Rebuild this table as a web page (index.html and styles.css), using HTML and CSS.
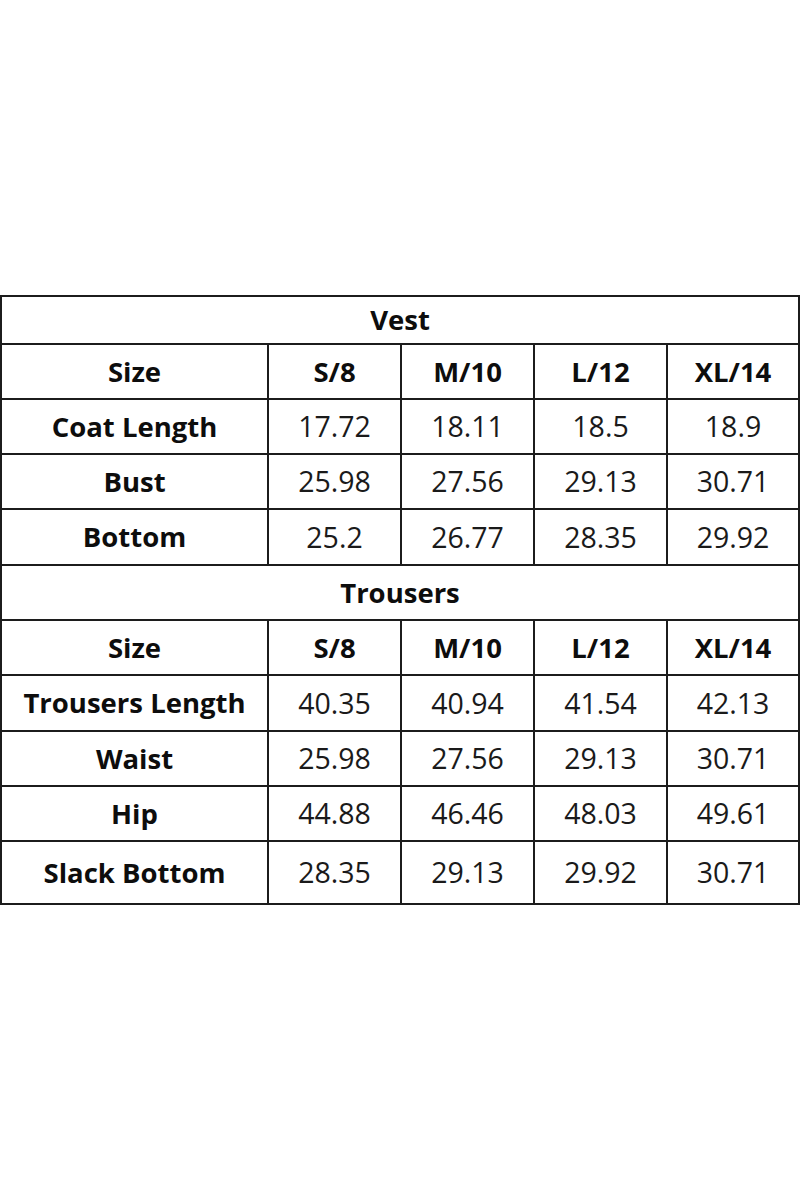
FILE: index.html
```html
<!DOCTYPE html>
<html>
<head>
<meta charset="utf-8">
<link rel="stylesheet" href="styles.css">
</head>
<body>
<div class="chart">
  <div class="cell title r0">Vest</div>
  <div class="cell head r1">Size</div><div class="cell head r1">S/8</div><div class="cell head r1">M/10</div><div class="cell head r1">L/12</div><div class="cell head r1">XL/14</div>
  <div class="cell head">Coat Length</div><div class="cell">17.72</div><div class="cell">18.11</div><div class="cell">18.5</div><div class="cell">18.9</div>
  <div class="cell head">Bust</div><div class="cell">25.98</div><div class="cell">27.56</div><div class="cell">29.13</div><div class="cell">30.71</div>
  <div class="cell head">Bottom</div><div class="cell">25.2</div><div class="cell">26.77</div><div class="cell">28.35</div><div class="cell">29.92</div>
  <div class="cell title">Trousers</div>
  <div class="cell head">Size</div><div class="cell head">S/8</div><div class="cell head">M/10</div><div class="cell head">L/12</div><div class="cell head">XL/14</div>
  <div class="cell head">Trousers Length</div><div class="cell">40.35</div><div class="cell">40.94</div><div class="cell">41.54</div><div class="cell">42.13</div>
  <div class="cell head">Waist</div><div class="cell">25.98</div><div class="cell">27.56</div><div class="cell">29.13</div><div class="cell">30.71</div>
  <div class="cell head">Hip</div><div class="cell">44.88</div><div class="cell">46.46</div><div class="cell">48.03</div><div class="cell">49.61</div>
  <div class="cell head">Slack Bottom</div><div class="cell">28.35</div><div class="cell">29.13</div><div class="cell">29.92</div><div class="cell">30.71</div>
</div>
</body>
</html>
```
FILE: styles.css
```css
html, body {
  margin: 0;
  padding: 0;
  background: #ffffff;
}
body {
  padding-top: 295px;
  font-family: "Open Sans", "DejaVu Sans", sans-serif;
  color: #111111;
}
.chart {
  width: 800px;
  box-sizing: border-box;
  display: grid;
  grid-template-columns: 265px 131px 131px 131px 1fr;
  grid-template-rows: 46px 53px 53px 53px 54px 53px 53px 54px 53px 53px 61px;
  gap: 2px;
  padding: 2px;
  background: #1c1c1c;
}
.cell {
  background: #ffffff;
  display: flex;
  align-items: center;
  justify-content: center;
  font-size: 28.5px;
  font-weight: 400;
  line-height: 1;
  color: #1a1a1a;
}
.head, .title {
  font-weight: 700;
  font-size: 27.5px;
  color: #0d0d0d;
}
.title {
  grid-column: 1 / -1;
}
```
